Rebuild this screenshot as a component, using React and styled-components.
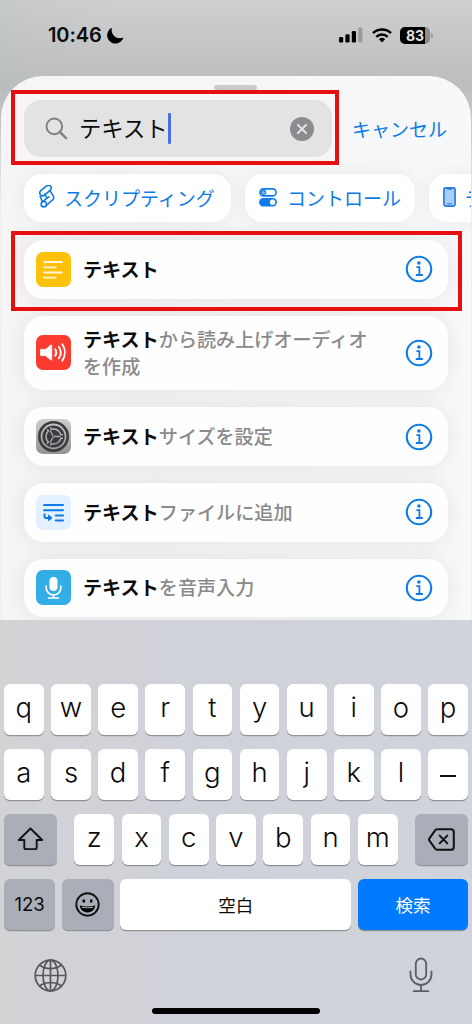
import React, { useState } from 'react';
import styled, { createGlobalStyle } from 'styled-components';

const BLUE = '#0f7be8';

const KEY_ROWS = ['qwertyuiop', 'asdfghjkl_'];

const actions = [
  { id: 'text', icon: 'text', color: '#fcc20b', rest: '' },
  { id: 'speech', icon: 'speaker', color: '#fb3b30', rest: 'から読み上げオーディオを作成' },
  { id: 'size', icon: 'gear', color: 'linear-gradient(#cdcdd0, #929295)', rest: 'サイズを設定' },
  { id: 'append', icon: 'append', color: '#e3f0fe', rest: 'ファイルに追加' },
  { id: 'dictate', icon: 'mic', color: '#32ade6', rest: 'を音声入力' },
];

/* Status bar icons */
const MoonIcon = () => (
  <svg width='17' height='17' viewBox='0 0 17 17'>
    <path d='M4.8.8A8.300 8.300 0 1 0 16.400 10.600C10.500 13.200 3.300 8.400 4.800.8Z' fill='#000' />
  </svg>
);

const SignalIcon = () => (
  <svg width='24' height='16' viewBox='0 0 24 16'>
    <rect x='0' y='10' width='4.2' height='5.5' rx='1.2' />
    <rect x='6.4' y='7.2' width='4.2' height='8.3' rx='1.2' />
    <rect x='12.8' y='4' width='4.2' height='11.5' rx='1.2' />
    <rect x='19.2' y='.5' width='4.2' height='15' rx='1.2' fill='#9b9b9b' />
  </svg>
);

const WifiIcon = () => (
  <svg width='20' height='15' viewBox='0 0 20 15' fill='none' stroke='#000' strokeWidth='2.5'>
    <path d='M1 5.1a13 13 0 0 1 18 0' />
    <path d='M4.3 8.8a8.2 8.2 0 0 1 11.4 0' />
    <path d='M10 14.5 6.9 11.3a4.5 4.5 0 0 1 6.2 0Z' fill='#000' stroke='none' />
  </svg>
);

/* Search icons */
const SearchIcon = () => (
  <svg width='23' height='23' viewBox='0 0 23 23' fill='none' stroke='#7f7f83' strokeWidth='2' strokeLinecap='round'>
    <circle cx='9.3' cy='9.4' r='7.8' />
    <path d='m15 15.2 6.1 6' strokeWidth='2.4' />
  </svg>
);

const ClearIcon = () => (
  <svg width='24' height='24' viewBox='0 0 24 24'>
    <circle cx='12' cy='12' r='12' fill='#8c8c90' />
    <path d='m7.9 7.9 8.2 8.2m0-8.2-8.2 8.2' stroke='#e9e8e9' strokeWidth='2' strokeLinecap='round' />
  </svg>
);

/* Category icons */
const ScriptIcon = () => (
  <svg width='17' height='24' viewBox='0 0 17 24' fill='none' stroke={BLUE} strokeWidth='1.6' strokeLinejoin='round' strokeLinecap='round'>
    <rect x='1' y='2.7' width='13' height='5.600' rx='2.8' transform='rotate(-40 7.5 5.5)' />
    <path d='M2.200 11.200 4.300 16.800l4.800-3.700-2.500-4' />
    <path d='m12 5.600 3.200 5.300c.9 1.700.7 2.900-.6 4L7.700 21' />
    <circle cx='5.800' cy='19.200' r='2.700' />
    <path d='m9.100 13.100 2-1.300' />
  </svg>
);

const ControlIcon = () => (
  <svg width='18' height='19' viewBox='0 0 18 19'>
    <rect x='.9' y='.9' width='16.2' height='7' rx='3.5' fill='#fff' stroke={BLUE} strokeWidth='1.6' />
    <circle cx='4.6' cy='4.4' r='2.1' fill='#8bc1f8' stroke={BLUE} strokeWidth='1.2' />
    <rect x='.1' y='10' width='17.8' height='8.4' rx='4.2' fill={BLUE} />
    <circle cx='13.6' cy='14.2' r='2.7' fill='#fff' />
  </svg>
);

const PhoneIcon = () => (
  <svg width='13' height='20' viewBox='0 0 13 20'>
    <rect x='.9' y='.9' width='11.2' height='18.2' rx='2' fill='#a5cefa' stroke='#2878d8' strokeWidth='1.6' />
    <path d='M4.3 1.8h4.4' stroke='#2878d8' strokeWidth='1.8' />
    <path d='M4 16.8h5' stroke='#2878d8' strokeWidth='1' />
  </svg>
);

const InfoIcon = () => (
  <svg width='28' height='28' viewBox='0 0 28 28' fill='none' stroke={BLUE}>
    <circle cx='14' cy='14' r='12.2' strokeWidth='2.1' />
    <circle cx='13.9' cy='8' r='1.8' fill={BLUE} stroke='none' />
    <path d='M11.4 12.2h3v7.7M10.8 20h7' strokeWidth='1.8' />
  </svg>
);

/* Icons of the action tiles, all drawn on a 35px grid */
const TileIcon = ({ name }) => (
  <svg width='35' height='35' viewBox='0 0 35 35' fill='none' strokeLinecap='round' strokeLinejoin='round'>
    {name === 'text' && (
      <path d='M8 10h18M8 15.3h11.5M8 20.5h18M8 25.7h11.5' stroke='#fff5d5' strokeWidth='1.8' />
    )}
    {name === 'speaker' && (
      <g stroke='#fff' strokeWidth='1.9'>
        <path d='M5.2 14.4h4.3l5.3-4.3c.5-.4.9-.3.9.4v14c0 .7-.4.8-.9.4l-5.3-4.3H5.2c-.5 0-.7-.3-.7-.7V15c0-.4.2-.6.7-.6Z' fill='#fff' strokeWidth='.8' />
        <path d='M19.3 14.3a6 6 0 0 1 0 6.4' />
        <path d='M22.8 11.7a10.3 10.3 0 0 1 0 11.6' />
        <path d='M26.3 9.3a14.6 14.6 0 0 1 0 16.4' />
      </g>
    )}
    {name === 'gear' && (
      <g stroke='#3b3b3f' strokeLinecap='butt'>
        <circle cx='17.5' cy='17.5' r='14.2' strokeWidth='2.6' />
        <circle cx='17.5' cy='17.5' r='9.7' strokeWidth='2.8' />
        <path d='M17.5 17.5H27M17.5 17.500l-4.800-8.200M17.500 17.500l-4.800 8.200' stroke='#adadb0' strokeWidth='5' />
        <circle cx='17.500' cy='17.500' r='6.800' fill='#3b3b3f' stroke='none' />
        <path d='M17.500 17.500H27.600M17.500 17.500l-5-8.700M17.500 17.500l-5 8.700' strokeWidth='2.200' />
        <path d='M18 17.500h6.500M17.300 17.200l-3.400-5.900M17.300 17.800l-3.400 5.900' stroke='#adadb0' strokeWidth='1.300' />
      </g>
    )}
    {name === 'append' && (
      <g stroke='#0f7be8' strokeWidth='2'>
        <path d='M8 10h19M8 15.2h19M19.7 20.4H27M19.7 25.5H27' />
        <path d='M8.5 19.3v2c0 1 .6 1.6 1.6 1.6h5' />
        <path d='m12.8 20.3 3.2 2.6-3.2 2.6Z' fill='#0f7be8' strokeWidth='1' />
      </g>
    )}
    {name === 'mic' && (
      <g stroke='#fff' strokeWidth='1.7'>
        <rect x='13.500' y='7' width='8' height='14' rx='4' fill='#fff' stroke='none' />
        <path d='M10.200 16v1.700a7.300 7.300 0 0 0 14.600 0V16M17.500 25v3M12.600 28h9.800' />
      </g>
    )}
  </svg>
);

/* Keyboard icons */
const ShiftIcon = () => (
  <svg width='27' height='24' viewBox='0 0 27 24' fill='none' stroke='#111' strokeWidth='1.9' strokeLinejoin='round'>
    <path d='M13.5 1.5 1.8 13h5.5v7.5c0 1 .6 1.6 1.6 1.6h9.2c1 0 1.6-.6 1.6-1.6V13h5.5Z' />
  </svg>
);

const BackspaceIcon = () => (
  <svg width='27' height='23' viewBox='0 0 27 23' fill='none' stroke='#111' strokeWidth='2' strokeLinejoin='round' strokeLinecap='round'>
    <path d='M9.6 1.2h13.3c1.8 0 2.9 1.1 2.9 2.9v14.8c0 1.8-1.1 2.9-2.9 2.9H9.6c-1 0-1.7-.3-2.3-1L1.8 13.1c-1-1.1-1-2.1 0-3.2l5.5-7.7c.6-.7 1.3-1 2.3-1Z' />
    <path d='m11.700 7.600 7.600 7.800m0-7.800-7.600 7.800' />
  </svg>
);

const EmojiIcon = () => (
  <svg width='25' height='25' viewBox='0 0 25 25'>
    <circle cx='12.5' cy='12.5' r='11.2' fill='none' stroke='#111' strokeWidth='1.9' />
    <ellipse cx='8.8' cy='9' rx='1.4' ry='1.8' />
    <ellipse cx='16.2' cy='9' rx='1.4' ry='1.8' />
    <path d='M4.800 13.500Q12.500 15.300 20.200 13.500C19.800 17.800 16.600 20.400 12.500 20.400S5.200 17.800 4.800 13.500Z' />
    <path d='M6.800 15.300Q12.500 16.400 18.200 15.300' stroke='#b4b7be' strokeWidth='1' fill='none' />
  </svg>
);

const GlobeIcon = () => (
  <svg width='33' height='33' viewBox='0 0 33 33' fill='none' stroke='#54575d' strokeWidth='1.7'>
    <circle cx='16.5' cy='16.5' r='15.3' />
    <ellipse cx='16.5' cy='16.5' rx='7.5' ry='15.3' />
    <path d='M16.5 1.200v30.600M1.200 16.500h30.600M5.500 6c6 4.700 16 4.700 22 0M5.500 27c6-4.700 16-4.700 22 0' />
  </svg>
);

const MicIcon = () => (
  <svg width='24' height='36' viewBox='0 0 24 36' fill='none' stroke='#5a5d64' strokeWidth='1.8' strokeLinecap='round'>
    <rect x='6.8' y='1.5' width='10.4' height='21' rx='5.2' />
    <path d='M1.500 14.500v3a10.500 10.500 0 0 0 21 0v-3M12 28v6M4.700 34.200h14.600' />
  </svg>
);

const App = () => {
  const [query, setQuery] = useState('テキスト');

  return (
    <Screen>
      <GlobalStyle />
      <StatusBar>
        <Clock>10:46</Clock>
        <MoonIcon />
        <StatusIcons>
          <SignalIcon />
          <WifiIcon />
          <Battery><span>83</span></Battery>
        </StatusIcons>
      </StatusBar>

      <Sheet>
        <Grabber />
        <SearchBar>
          <SearchField>
            <SearchIcon />
            <Query>{query}</Query>
            <Caret />
            <ClearButton type='button' onClick={() => setQuery('')}>
              <ClearIcon />
            </ClearButton>
          </SearchField>
          <Cancel type='button'>キャンセル</Cancel>
        </SearchBar>

        <Chips>
          <Chip $width='207px'><ScriptIcon />スクリプティング</Chip>
          <Chip $width='170px' $gap='10px'><ControlIcon />コントロール</Chip>
          <Chip $width='150px' $gap='9px'><PhoneIcon />デバイス</Chip>
        </Chips>

        <Results>
          {actions.map(({ id, icon, color, rest }) => (
            <Row key={id} $tall={id === 'speech'}>
              <Tile $color={color}><TileIcon name={icon} /></Tile>
              <Label><b>テキスト</b>{rest}</Label>
              <InfoIcon />
            </Row>
          ))}
        </Results>
      </Sheet>

      <Keyboard>
        {KEY_ROWS.map((row) => (
          <KeyRow key={row}>
            {[...row].map((k) => (
              k === '_' ? <Key key={k}><Dash /></Key> : <Key key={k}>{k}</Key>
            ))}
          </KeyRow>
        ))}
        <KeyRow>
          <Key $width='53px' $dark><ShiftIcon /></Key>
          <Letters>
            {[...'zxcvbnm'].map((k) => <Key key={k}>{k}</Key>)}
          </Letters>
          <Key $width='53px' $dark><BackspaceIcon /></Key>
        </KeyRow>
        <KeyRow>
          <Key $width='51px' $dark $size='18.5px'>123</Key>
          <Key $width='52px' $dark><EmojiIcon /></Key>
          <Key $width='231px' $size='17.5px'>空白</Key>
          <Key $width='110px' $size='17.5px' $primary>検索</Key>
        </KeyRow>
        <BottomBar>
          <GlobeIcon />
          <MicIcon />
        </BottomBar>
        <HomeIndicator />
      </Keyboard>

      {/* Red callouts over the search field and the first result */}
      <Callout $x={10.5} $y={89.5} $w={328} $h={75.5} />
      <Callout $x={10.5} $y={231} $w={451.5} $h={80} />
    </Screen>
  );
};

const GlobalStyle = createGlobalStyle`
  * {
    box-sizing: border-box;
  }
  body {
    margin: 0;
    overflow: hidden;
  }
  button {
    border: 0;
    padding: 0;
    background: none;
    font: inherit;
  }
  svg {
    display: block;
    flex: none;
  }
`;

const Screen = styled.div`
  position: relative;
  display: flex;
  flex-direction: column;
  width: 472px;
  height: 1024px;
  overflow: hidden;
  background: linear-gradient(90deg, rgba(180, 190, 194, 0.3), transparent 25%) 0 0 / 100% 130px no-repeat,
    linear-gradient(#cfcfcf, #bdbdbd 85px, #c6c7c9 120px, #eeeeef 210px);
  font-family: Inter, 'Noto Sans CJK JP', sans-serif;
  color: #0b0b0c;
`;

const StatusBar = styled.header`
  display: flex;
  align-items: center;
  height: 76px;
  padding: 0 40px 6px 48px;
`;

const Clock = styled.span`
  width: 59px;
  font-size: 20px;
  font-weight: 600;
  letter-spacing: -0.1px;
`;

const StatusIcons = styled.div`
  display: flex;
  align-items: center;
  gap: 8.5px;
  margin-left: auto;
`;

const Battery = styled.div`
  position: relative;
  display: flex;
  align-items: center;
  justify-content: center;
  width: 30px;
  height: 17px;
  margin-right: 2px;
  border-radius: 5px;
  background: linear-gradient(90deg, #000 84%, #8d8d8d 84%);
  color: #e4e4e4;
  font-size: 14px;
  font-weight: 700;
  &::after {
    content: '';
    position: absolute;
    right: -3px;
    width: 2px;
    height: 5px;
    border-radius: 0 2px 2px 0;
    background: #999;
  }
`;

const Sheet = styled.main`
  display: flex;
  flex-direction: column;
  height: 544px;
  margin: 0 1px;
  padding: 9px 0 0 23px;
  border-radius: 42px 42px 0 0;
  overflow: hidden;
  background: linear-gradient(90deg, #f7f4f4, #f6f6f7 50%, #f6f8f9);
`;

const Grabber = styled.div`
  width: 43px;
  height: 5px;
  margin-left: 190px;
  border-radius: 3px;
  background: #cbc9ca;
`;

const SearchBar = styled.div`
  display: flex;
  align-items: center;
  gap: 20px;
  height: 57px;
  margin-top: 10px;
`;

const SearchField = styled.div`
  display: flex;
  align-items: center;
  width: 308px;
  height: 57px;
  padding: 0 18px 0 21px;
  border-radius: 17px;
  background: #e4e3e3;
`;

const Query = styled.span`
  margin-left: 11px;
  font-size: 22.3px;
  line-height: 30px;
`;

const Caret = styled.i`
  width: 3px;
  height: 31px;
  border-radius: 1px;
  background: #4a6fe3;
`;

const ClearButton = styled.button`
  margin-left: auto;
`;

const Cancel = styled.button`
  color: ${BLUE};
  font-size: 19px;
  white-space: nowrap;
`;

const Chips = styled.div`
  display: flex;
  gap: 14px;
  margin-top: 16.5px;
`;

const Chip = styled.div`
  display: flex;
  flex: none;
  align-items: center;
  gap: ${({ $gap }) => $gap || '9px'};
  width: ${({ $width }) => $width};
  height: 48px;
  padding: 0 0 1px 14px;
  border-radius: 18px;
  background: #fff;
  box-shadow: 0 0 20px rgba(0, 0, 0, 0.06);
  color: ${BLUE};
  font-size: 19px;
  white-space: nowrap;
`;

const Results = styled.div`
  display: flex;
  flex-direction: column;
  gap: 17px;
  margin-top: 18.5px;
`;

const Row = styled.div`
  display: flex;
  flex: none;
  align-items: center;
  width: 424px;
  height: ${({ $tall }) => ($tall ? '74.5px' : '58.7px')};
  padding: 0 15px 0 12px;
  border-radius: 20px;
  background: #fefefe;
  box-shadow: 0 0 22px rgba(0, 0, 0, 0.08);
`;

const Tile = styled.div`
  width: 35px;
  height: 35px;
  border-radius: 7px;
  background: ${({ $color }) => $color};
`;

const Label = styled.div`
  width: 290px;
  margin: 0 auto 0 12px;
  padding-top: 2px;
  color: #8a8a8c;
  font-size: 19.1px;
  font-weight: 500;
  line-height: 27px;
  b {
    color: #0b0b0c;
    font-weight: 700;
  }
`;

const Keyboard = styled.section`
  display: flex;
  flex: 1;
  flex-direction: column;
  gap: 14.5px;
  padding: 64px 4px 0;
  background: linear-gradient(90deg, #d2d3d5, #d0d2d9 35%, #d0d3db);
`;

const KeyRow = styled.div`
  display: flex;
  justify-content: space-between;
`;

const Letters = styled.div`
  display: flex;
  gap: 7.6px;
`;

const keyColor = ({ $dark, $primary }) => {
  if ($primary) return '#007aff';
  return $dark ? 'rgba(137, 143, 155, 0.54)' : '#fff';
};

const Key = styled.div`
  display: flex;
  align-items: center;
  justify-content: center;
  width: ${({ $width }) => $width || '39.7px'};
  height: 50.5px;
  padding-bottom: ${({ $width }) => ($width ? '0' : '5px')};
  border-radius: 6px;
  background: ${keyColor};
  box-shadow: 0 1.2px 0 #909297;
  color: ${({ $primary }) => ($primary ? '#fff' : '#0b0b0c')};
  font-size: ${({ $size }) => $size || '27.5px'};
  font-weight: ${({ $size }) => ($size ? 400 : 340)};
`;

const Dash = styled.i`
  width: 16px;
  height: 2px;
  margin-top: 9px;
  background: #111;
`;

const BottomBar = styled.div`
  display: flex;
  align-items: center;
  justify-content: space-between;
  height: 36px;
  margin-top: 13px;
  padding: 0 35px 0 30px;
`;

const HomeIndicator = styled.div`
  width: 168px;
  height: 6px;
  margin: 0 auto;
  border-radius: 3px;
  background: #000;
`;

const Callout = styled.div`
  position: absolute;
  left: ${({ $x }) => $x}px;
  top: ${({ $y }) => $y}px;
  width: ${({ $w }) => $w}px;
  height: ${({ $h }) => $h}px;
  border: 4px solid #e60f12;
  pointer-events: none;
`;

export default App;
